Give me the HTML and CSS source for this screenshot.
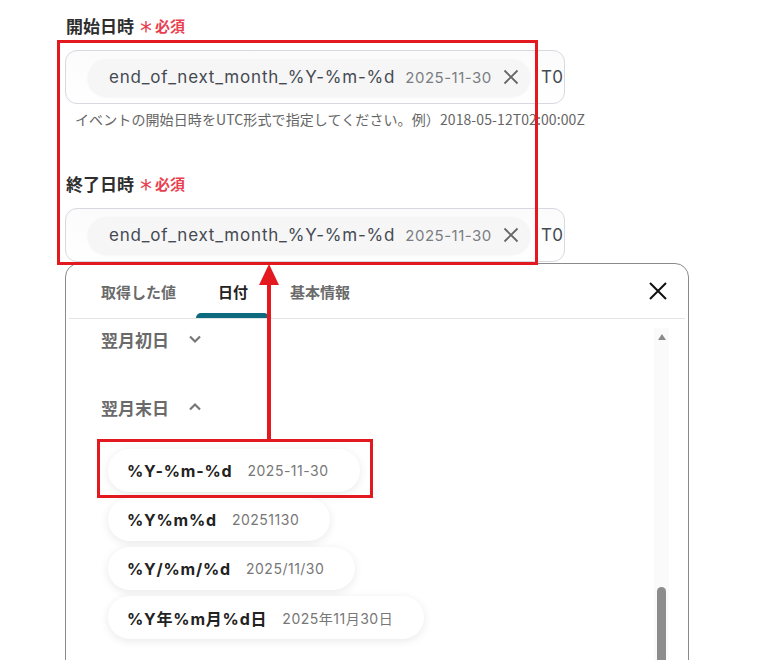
FILE: index.html
```html
<!DOCTYPE html>
<html lang="ja">
<head>
<meta charset="utf-8">
<link rel="stylesheet" href="styles.css">
</head>
<body>
<div class="page">
  <div class="form">
    <div class="label">開始日時<span class="req"><span class="ast">*</span>必須</span></div>
    <div class="input">
      <div class="chip"><span class="chip-key">end_of_next_month_%Y-%m-%d</span><span class="chip-val">2025-11-30</span>
        <svg class="chip-x" width="16" height="16" viewBox="0 0 16 16"><path d="M1.5 1.5L14.5 14.5M14.5 1.5L1.5 14.5" stroke="#666" stroke-width="1.8" fill="none"/></svg>
      </div>
      <span class="rest">T02:00:00Z</span>
    </div>
    <div class="help">イベントの開始日時をUTC形式で指定してください。例）2018-05-12T02:00:00Z</div>

    <div class="label label2">終了日時<span class="req"><span class="ast">*</span>必須</span></div>
    <div class="input">
      <div class="chip"><span class="chip-key">end_of_next_month_%Y-%m-%d</span><span class="chip-val">2025-11-30</span>
        <svg class="chip-x" width="16" height="16" viewBox="0 0 16 16"><path d="M1.5 1.5L14.5 14.5M14.5 1.5L1.5 14.5" stroke="#666" stroke-width="1.8" fill="none"/></svg>
      </div>
      <span class="rest">T02:00:00Z</span>
    </div>

    <div class="popup">
      <div class="tabs">
        <div class="tab">取得した値</div>
        <div class="tab active">日付</div>
        <div class="tab">基本情報</div>
        <svg class="close" width="20" height="20" viewBox="0 0 20 20"><path d="M2 2L18 18M18 2L2 18" stroke="#111" stroke-width="2" fill="none"/></svg>
      </div>
      <div class="sep"></div>
      <div class="body">
        <div class="list">
          <div class="section">翌月初日
            <svg class="chev" width="14" height="10" viewBox="0 0 14 10"><path d="M2 2.5L7 7.5L12 2.5" stroke="#777" stroke-width="2.2" fill="none"/></svg>
          </div>
          <div class="section open">翌月末日
            <svg class="chev" width="14" height="10" viewBox="0 0 14 10"><path d="M2 7.5L7 2.5L12 7.5" stroke="#777" stroke-width="2.2" fill="none"/></svg>
          </div>
          <div class="items">
            <div class="item"><span class="ikey">%Y-%m-%d</span><span class="ival">2025-11-30</span></div>
            <div class="item"><span class="ikey">%Y%m%d</span><span class="ival">20251130</span></div>
            <div class="item"><span class="ikey">%Y/%m/%d</span><span class="ival">2025/11/30</span></div>
            <div class="item"><span class="ikey">%Y年%m月%d日</span><span class="ival">2025年11月30日</span></div>
          </div>
        </div>
        <div class="scrollbar">
          <svg class="up" width="10" height="8" viewBox="0 0 10 8"><path d="M1 7L5 1L9 7Z" fill="#8a8a8a"/></svg>
          <div class="thumb"></div>
        </div>
      </div>
    </div>
  </div>

  <div class="mark mark1"></div>
  <div class="mark mark2"></div>
  <div class="arrow-line"></div>
  <svg class="arrow-head" width="22" height="22" viewBox="0 0 22 22"><path d="M11 0L21 21H1Z" fill="#e3191f"/></svg>
</div>
</body>
</html>
```

FILE: styles.css
```css
html, body {
  margin: 0;
  padding: 0;
  background: #fff;
  overflow: hidden;
}
body {
  width: 762px;
  height: 660px;
  font-family: "Inter", "Noto Sans CJK JP", sans-serif;
  color: #333;
}
.page {
  position: relative;
  width: 762px;
  height: 660px;
  overflow: hidden;
}
.form {
  padding: 13px 0 0 65px;
  width: 624px;
}
.label {
  font-family: "Noto Sans CJK JP", sans-serif;
  font-size: 17px;
  font-weight: 700;
  color: #2e2e2e;
  height: 26px;
  line-height: 26px;
  padding-left: 1px;
  margin-bottom: 11px;
  display: flex;
  align-items: center;
}
.label2 {
  margin-top: 42px;
}
.req {
  color: #e8404f;
  font-size: 15px;
  font-weight: 700;
  margin-left: 6px;
  display: flex;
  align-items: center;
}
.ast {
  font-family: "DejaVu Sans", sans-serif;
  font-size: 24px;
  font-weight: 400;
  line-height: 14px;
  margin-right: 3px;
  position: relative;
  top: 5px;
}
.input {
  width: 476px;
  height: 52px;
  border: 1px solid #d6d9df;
  border-radius: 12px;
  overflow: hidden;
  display: flex;
  align-items: center;
  padding-left: 22px;
  box-sizing: content-box;
  white-space: nowrap;
  background: linear-gradient(#fbfbfc, #ffffff);
}
.chip {
  flex: none;
  width: 442px;
  box-sizing: border-box;
  height: 37px;
  border-radius: 19px;
  background: #f6f6f7;
  box-shadow: 0 1px 3px rgba(0,0,0,0.06);
  display: flex;
  align-items: center;
  padding-left: 21px;
}
.chip-key {
  font-size: 17px;
  color: #454a52;
  letter-spacing: 0.8px;
}
.chip-val {
  font-size: 15px;
  color: #7a7d82;
  margin-left: 10px;
  letter-spacing: 0.5px;
}
.chip-x {
  margin-left: 11px;
}
.rest {
  margin-left: 11px;
  font-size: 17px;
  color: #454a52;
  letter-spacing: 0.8px;
}
.help {
  font-family: "Noto Sans CJK JP", sans-serif;
  font-size: 14px;
  color: #666;
  margin-top: 5px;
  padding-left: 10px;
  line-height: 20px;
  white-space: nowrap;
  letter-spacing: 0.1px;
}
.popup {
  width: 622px;
  height: 420px;
  border: 1px solid #8a8a8a;
  border-radius: 14px 14px 0 0;
  margin-top: 1px;
  background: #fff;
}
.tabs {
  display: flex;
  align-items: stretch;
  height: 54px;
  padding-left: 14px;
  position: relative;
}
.tab {
  font-family: "Noto Sans CJK JP", sans-serif;
  font-size: 15px;
  font-weight: 700;
  color: #6b6b6b;
  padding: 0 21px;
  display: flex;
  align-items: center;
  position: relative;
}
.tab.active {
  color: #222;
}
.tab.active::after {
  content: "";
  position: absolute;
  left: -1px;
  right: 0;
  bottom: 0;
  height: 5px;
  background: #0d6a7e;
  border-radius: 5px 5px 0 0;
}
.close {
  margin-left: auto;
  margin-right: 20px;
  align-self: center;
}
.sep {
  height: 1px;
  background: #e3e3e3;
  margin: 0 3px;
}
.body {
  display: flex;
  height: 365px;
}
.list {
  flex: 1;
  padding-left: 35px;
}
.section {
  font-family: "Noto Sans CJK JP", sans-serif;
  font-size: 17px;
  font-weight: 700;
  color: #6a6a6a;
  height: 40px;
  display: flex;
  align-items: center;
}
.section.open {
  margin-top: 28px;
}
.chev {
  margin-left: 19px;
}
.items {
  margin-top: 22px;
  padding-left: 7px;
  display: flex;
  flex-direction: column;
  align-items: flex-start;
  gap: 6px;
}
.item {
  height: 43px;
  border-radius: 22px;
  background: #fff;
  box-shadow: 0 2px 10px rgba(0,0,0,0.09);
  display: flex;
  align-items: center;
  padding: 0 31px 0 19px;
  white-space: nowrap;
}
.ikey {
  font-family: "Inter", "Noto Sans CJK JP", sans-serif;
  font-size: 16px;
  font-weight: 700;
  color: #222;
  letter-spacing: 0.8px;
}
.ival {
  font-family: "Inter", "Noto Sans CJK JP", sans-serif;
  font-size: 14px;
  color: #777;
  margin-left: 15px;
  letter-spacing: 0.5px;
}
.scrollbar {
  width: 15px;
  margin-right: 19px;
  margin-top: 9px;
  background: #fafafa;
  position: relative;
  display: flex;
  flex-direction: column;
  align-items: center;
}
.up {
  margin-top: 5px;
}
.thumb {
  margin-top: auto;
  width: 9px;
  height: 107px;
  background: #8c8c8c;
  border-radius: 5px 5px 0 0;
  margin-bottom: -10px;
}
.mark {
  position: absolute;
  border: 3px solid #e3191f;
  box-sizing: border-box;
}
.mark1 {
  left: 57px;
  top: 40px;
  width: 481px;
  height: 225px;
}
.mark2 {
  left: 97px;
  top: 439px;
  width: 276px;
  height: 59px;
}
.arrow-line {
  position: absolute;
  left: 267px;
  top: 282px;
  width: 4px;
  height: 158px;
  background: #e3191f;
}
.arrow-head {
  position: absolute;
  left: 258px;
  top: 264px;
}
```
